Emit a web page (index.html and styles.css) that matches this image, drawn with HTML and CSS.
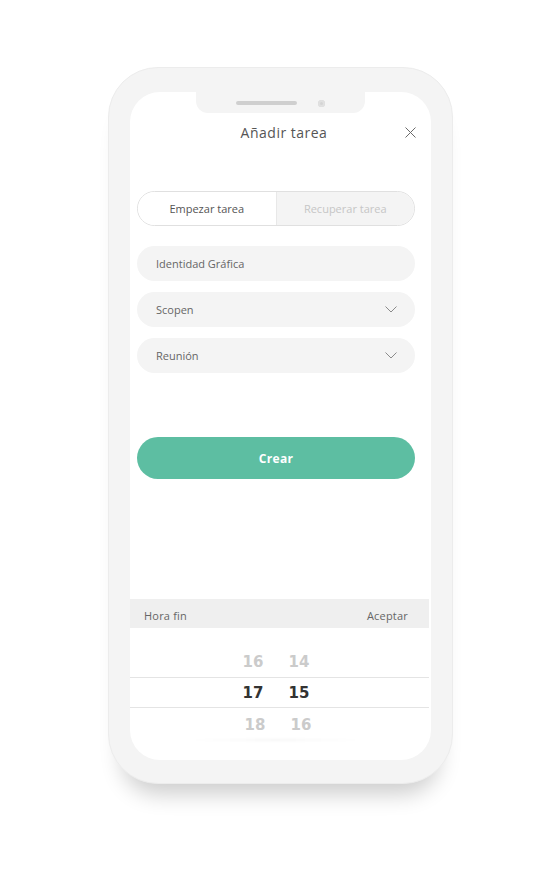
FILE: index.html
```html
<!DOCTYPE html>
<html lang="es">
<head>
  <meta charset="UTF-8" />
  <meta name="viewport" content="width=device-width, initial-scale=1.0"/>
  <title>Añadir tarea</title>
  <link rel="stylesheet" href="styles.css">
</head>
<body>

<div class="stage">
  <div class="phone">
    <div class="screen">

      <!-- notch with speaker and camera -->
      <div class="notch">
        <span class="speaker"></span>
        <span class="camera"></span>
      </div>

      <div class="header">
        <span></span>
        <h1 class="title">Añadir tarea</h1>
        <button class="close" aria-label="Cerrar">
          <svg width="11" height="11" viewBox="0 0 11 11"><path d="M0.5 0.5 L10.5 10.5 M10.5 0.5 L0.5 10.5" stroke="#6a6a6a" stroke-width="1" fill="none"/></svg>
        </button>
      </div>

      <div class="form">
        <div class="segmented">
          <div class="seg seg-active">Empezar tarea</div>
          <div class="seg">Recuperar tarea</div>
        </div>

        <div class="field">Identidad Gráfica</div>
        <div class="field field-select">
          Scopen
          <svg class="chevron" width="12" height="7" viewBox="0 0 12 7"><polyline points="0.5,0.5 6,6 11.5,0.5" stroke="#8a8a8a" stroke-width="1" fill="none"/></svg>
        </div>
        <div class="field field-select">
          Reunión
          <svg class="chevron" width="12" height="7" viewBox="0 0 12 7"><polyline points="0.5,0.5 6,6 11.5,0.5" stroke="#8a8a8a" stroke-width="1" fill="none"/></svg>
        </div>

        <button class="create">Crear</button>
      </div>

      <!-- time picker -->
      <div class="picker">
        <div class="picker-head">
          <span>Hora fin</span>
          <span>Aceptar</span>
        </div>
        <div class="picker-rows">
          <div class="row"><span>16</span><span>14</span></div>
          <div class="row row-active"><span>17</span><span>15</span></div>
          <div class="row row-last"><span>18</span><span>16</span></div>
        </div>
        <div class="fade"></div>
      </div>

    </div>
  </div>
</div>

</body>
</html>
```

FILE: styles.css
```css
body {
  margin: 0;
  padding: 0;
  background: #fff;
  font-family: 'Open Sans', 'Liberation Sans', sans-serif;
  color: #555;
}

.stage {
  padding: 67px 0 0 108px;
  height: 884px;
  box-sizing: border-box;
}

.phone {
  width: 345px;
  height: 717px;
  box-sizing: border-box;
  padding: 24px 21px 23px 21px;
  background: #f4f4f4;
  border: 1px solid #ececec;
  border-radius: 50px;
  box-shadow: 0 24px 22px -14px rgba(0, 0, 0, 0.2);
}

.screen {
  height: 668px;
  background: #fff;
  border-radius: 30px;
  overflow: hidden;
  display: flex;
  flex-direction: column;
}

.notch {
  width: 169px;
  height: 21px;
  margin: 0 auto;
  background: #f4f4f4;
  border-radius: 0 0 12px 12px;
  display: flex;
  align-items: center;
  justify-content: center;
  gap: 21px;
  padding-top: 1px;
  box-sizing: border-box;
}

.speaker {
  width: 61px;
  height: 4px;
  border-radius: 2px;
  background: #cfcfcf;
}

.camera {
  width: 7px;
  height: 7px;
  border-radius: 50%;
  background: #d4d4d4;
  box-shadow: inset 0 0 0 2px #e0e0e0;
}

.header {
  height: 38px;
  display: grid;
  grid-template-columns: 1fr auto 1fr;
  align-items: center;
}

.title {
  margin: 0;
  padding-left: 7px;
  font-size: 14px;
  font-weight: 400;
  letter-spacing: 0.5px;
  color: #555;
}

.close {
  justify-self: end;
  margin-right: 15px;
  padding: 0;
  border: none;
  background: none;
  display: flex;
}

.form {
  padding: 40px 16px 0 7px;
  display: flex;
  flex-direction: column;
}

.segmented {
  height: 35px;
  display: flex;
  border: 1px solid #e0e0e0;
  border-radius: 18px;
  overflow: hidden;
  box-sizing: border-box;
  margin-bottom: 20px;
}

.seg {
  flex: 1;
  display: flex;
  align-items: center;
  justify-content: center;
  font-size: 11px;
  color: #c6c6c6;
  background: #f4f4f4;
}

.seg-active {
  background: #fff;
  color: #555;
  border-right: 1px solid #e8e8e8;
}

.field {
  height: 35px;
  margin-bottom: 11px;
  padding: 0 18px 0 19px;
  background: #f4f4f4;
  border-radius: 18px;
  display: flex;
  align-items: center;
  justify-content: space-between;
  font-size: 11px;
  color: #666;
}

.create {
  height: 42px;
  margin-top: 53px;
  border: none;
  border-radius: 21px;
  background: #5dbea2;
  color: #fff;
  font-family: 'Open Sans', sans-serif;
  font-weight: 700;
  font-size: 12px;
  letter-spacing: 0.3px;
}

.picker {
  margin-top: 120px;
  margin-right: 2px;
  position: relative;
}

.picker-head {
  height: 29px;
  background: #efefef;
  display: flex;
  align-items: center;
  justify-content: space-between;
  padding: 4px 21px 0 14px;
  box-sizing: border-box;
  font-size: 11px;
  color: #666;
  letter-spacing: 0.2px;
}

.picker-rows {
  padding-top: 18px;
}

.row {
  height: 31px;
  display: flex;
  align-items: center;
  padding-left: 100px;
  font-family: 'DejaVu Sans', sans-serif;
  font-weight: 700;
  font-size: 15px;
  color: #cbcbcb;
  box-sizing: border-box;
}

.row span {
  width: 46px;
  text-align: center;
}

.row-active {
  color: #333;
  border-top: 1px solid #e4e4e4;
  border-bottom: 1px solid #e4e4e4;
}

.row-last {
  padding-top: 3px;
}

.row-last span:first-child {
  padding-left: 2px;
}

.fade {
  height: 2px;
  margin: 0 70px 0 62px;
  background: linear-gradient(90deg, rgba(0,0,0,0), rgba(0,0,0,0.04), rgba(0,0,0,0));
  filter: blur(1px);
}
```
